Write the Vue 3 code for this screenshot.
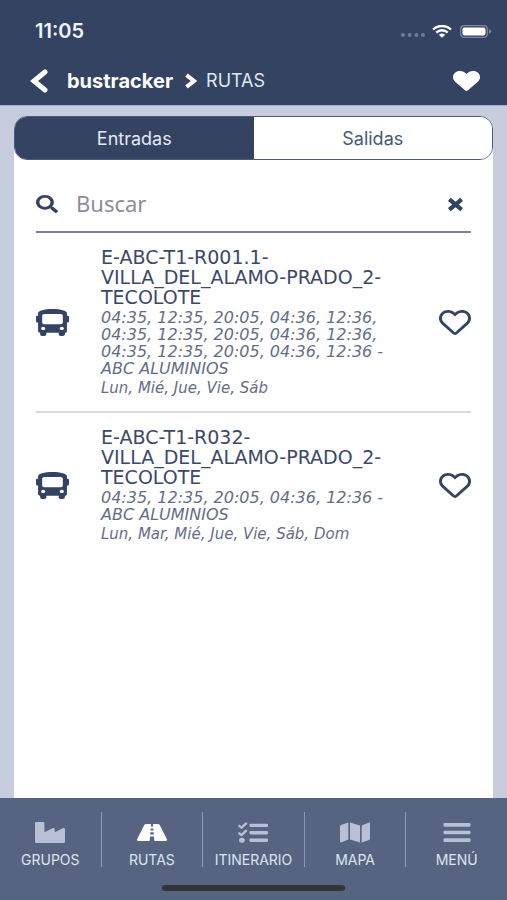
<script setup>
import { ref } from 'vue'

const tab = ref('Entradas')
const query = ref('')
const tabs = ['Entradas', 'Salidas']

const routes = [
  {
    name: ['E-ABC-T1-R001.1-', 'VILLA_DEL_ALAMO-PRADO_2-', 'TECOLOTE'],
    times: [
      '04:35, 12:35, 20:05, 04:36, 12:36,',
      '04:35, 12:35, 20:05, 04:36, 12:36,',
      '04:35, 12:35, 20:05, 04:36, 12:36 -',
      'ABC ALUMINIOS',
    ],
    days: 'Lun, Mié, Jue, Vie, Sáb',
  },
  {
    name: ['E-ABC-T1-R032-', 'VILLA_DEL_ALAMO-PRADO_2-', 'TECOLOTE'],
    times: ['04:35, 12:35, 20:05, 04:36, 12:36 -', 'ABC ALUMINIOS'],
    days: 'Lun, Mar, Mié, Jue, Vie, Sáb, Dom',
  },
]

const nav = [
  {
    label: 'GRUPOS',
    box: '0 32 512 448',
    path: 'M475.115 163.781L336 252.309v-68.28c0-18.916-20.931-30.399-36.885-20.248L160 252.309V56c0-13.255-10.745-24-24-24H24C10.745 32 0 42.745 0 56v400c0 13.255 10.745 24 24 24h464c13.255 0 24-10.745 24-24V184.029c0-18.917-20.931-30.399-36.885-20.248z',
  },
  {
    label: 'RUTAS',
    active: true,
    box: '0 0 30 21',
    path: 'M9 2H14L13.800 4.500H16.200L16 2H21Q22.200 2 22.700 3L29.800 17Q30.400 19 28.600 19H17.300L17 14.500H13L12.700 19H1.400Q-.4 19 .2 17L7.300 3Q7.800 2 9 2ZM13.600 6.500L13.500 8.500H16.500L16.400 6.500ZM13.300 10.300L13.200 12.500H16.800L16.700 10.300Z',
  },
  {
    label: 'ITINERARIO',
    box: '0 0 30 21',
    path: 'M1.200 2.600L3.400 4.300L7.300 .4Q8 -.1 8.600 .5L9.200 1.200Q9.600 1.700 9 2.300L4.300 6.600Q3.500 7.200 2.700 6.600L.3 4.600Q-.2 4 .3 3.400ZM1.200 9.900L3.400 11.600L7.300 7.700Q8 7.200 8.600 7.800L9.200 8.500Q9.600 9 9 9.600L4.300 13.900Q3.500 14.500 2.700 13.900L.3 11.900Q-.2 11.300 .3 10.700ZM1 18.300a2.900 2.500 0 1 0 5.800 0a2.900 2.500 0 1 0 -5.800 0ZM12.500 1.700H29Q30 1.700 30 2.500V4.300Q30 5.100 29 5.100H12.500Q11.500 5.100 11.500 4.300V2.500Q11.500 1.700 12.500 1.700ZM12.500 9H29Q30 9 30 9.800V11.600Q30 12.400 29 12.400H12.500Q11.500 12.400 11.500 11.600V9.800Q11.500 9 12.500 9ZM12.500 16.500H29Q30 16.500 30 17.300V19.100Q30 19.900 29 19.900H12.500Q11.500 19.900 11.500 19.100V17.300Q11.500 16.500 12.500 16.500Z',
  },
  {
    label: 'MAPA',
    box: '0 20 576 472',
    path: 'M0 117.66v346.32c0 11.32 11.43 19.06 21.94 14.86L160 416V32L20.12 87.95A32.006 32.006 0 0 0 0 117.66zM192 416l192 64V96L192 32v384zM554.06 33.16L416 96v384l139.88-55.95A31.996 31.996 0 0 0 576 394.34V48.02c0-11.32-11.43-19.06-21.94-14.86z',
  },
  {
    label: 'MENÚ',
    box: '0 0 30 21',
    path: 'M2.500 1H27.500Q28.500 1 28.500 2V3.800Q28.500 4.800 27.500 4.800H2.500Q1.500 4.800 1.500 3.800V2Q1.500 1 2.500 1ZM2.500 8.700H27.500Q28.500 8.700 28.500 9.700V11.300Q28.500 12.300 27.500 12.300H2.500Q1.500 12.300 1.500 11.300V9.700Q1.500 8.700 2.500 8.700ZM2.500 16.200H27.500Q28.500 16.200 28.500 17.200V19Q28.500 20 27.500 20H2.500Q1.500 20 1.500 19V17.200Q1.500 16.200 2.500 16.200Z',
  },
]
</script>

<template>
  <div class="page">
    <header class="header">
      <div class="status">
        <span class="clock">11:05</span>
        <svg class="dots" viewBox="0 0 24 4" aria-hidden="true">
          <circle cx="2" cy="2" r="2" /><circle cx="8.600" cy="2" r="2" />
          <circle cx="15.300" cy="2" r="2" /><circle cx="22" cy="2" r="2" />
        </svg>
        <svg class="wifi" viewBox="0 0 20 13" aria-hidden="true">
          <path d="M1 4.500C6 -.2 14 -.2 19 4.500" />
          <path d="M4.300 7.600C7.500 4.500 12.500 4.500 15.700 7.600" />
          <path class="fill" d="M6.800 9.800Q10 7.400 13.200 9.800L10 12.800Z" />
        </svg>
        <svg class="battery" viewBox="0 0 32 13" aria-hidden="true">
          <rect class="shell" x=".7" y=".7" width="26.600" height="11.600" rx="3.500" />
          <rect class="charge" x="2.500" y="2.400" width="23" height="8.200" rx="1.800" />
          <path class="cap" d="M29 4.300Q31.200 5 31.200 6.500Q31.200 8 29 8.700Z" />
        </svg>
      </div>
      <div class="crumbs">
        <button class="bare" aria-label="Atrás">
          <svg class="back" viewBox="0 0 18 24"><path d="M15 3L4 12L15 21" /></svg>
        </button>
        <a class="brand" href="#">bustracker</a>
        <svg class="next" viewBox="0 0 13 16" aria-hidden="true"><path d="M2.500 2.200L10 8L2.500 13.800" /></svg>
        <span class="current">RUTAS</span>
        <button class="bare fav" aria-label="Favoritos">
          <svg class="heart" viewBox="0 32 512 448" preserveAspectRatio="none">
            <path d="M462.3 62.6C407.5 15.900 326 24.300 275.700 76.200L256 96.500l-19.700-20.300C186.100 24.300 104.500 15.900 49.700 62.600c-62.800 53.600-66.100 149.800-9.900 207.900l193.500 199.800c12.500 12.900 32.800 12.900 45.300 0l193.500-199.800c56.300-58.100 53-154.300-9.800-207.900z" />
          </svg>
        </button>
      </div>
    </header>

    <main class="main">
      <section class="panel">
        <div class="tabs" role="tablist">
          <button
            v-for="t in tabs"
            :key="t"
            class="tab"
            :class="{ selected: t === tab }"
            role="tab"
            :aria-selected="t === tab"
            @click="tab = t"
          >{{ t }}</button>
        </div>

        <div class="content">
          <div class="search">
            <label class="search-label" for="search" aria-label="Buscar">
              <svg class="lens" viewBox="0 0 512 512" preserveAspectRatio="none">
                <path d="M505 442.700L405.300 343c-4.500-4.500-10.600-7-17-7H372c27.600-35.300 44-79.700 44-128C416 93.100 322.900 0 208 0S0 93.100 0 208s93.100 208 208 208c48.300 0 92.700-16.400 128-44v16.300c0 6.400 2.500 12.500 7 17l99.700 99.700c9.400 9.400 24.600 9.400 33.900 0l28.300-28.300c9.400-9.400 9.400-24.600.1-34zM208 336c-70.700 0-128-57.200-128-128 0-70.700 57.200-128 128-128 70.700 0 128 57.200 128 128 0 70.700-57.200 128-128 128z" />
              </svg>
            </label>
            <input id="search" v-model="query" class="field" type="text" placeholder="Buscar" />
            <button class="bare" aria-label="Borrar" @click="query = ''">
              <svg class="clear" viewBox="0 0 16 14"><path d="M2.200 2.200L13.800 11.800M13.800 2.200L2.200 11.800" /></svg>
            </button>
          </div>

          <ul class="routes">
            <li v-for="r in routes" :key="r.name[0]" class="route">
              <svg class="bus" viewBox="0 0 512 512" preserveAspectRatio="none" aria-hidden="true">
                <path d="M488 128h-8V80c0-44.800-99.200-80-224-80S32 35.200 32 80v48h-8c-13.250 0-24 10.740-24 24v80c0 13.250 10.750 24 24 24h8v160c0 17.670 14.330 32 32 32v32c0 17.670 14.330 32 32 32h32c17.670 0 32-14.330 32-32v-32h192v32c0 17.670 14.330 32 32 32h32c17.670 0 32-14.330 32-32v-32h6.400c16 0 25.600-12.800 25.600-25.600V256h8c13.250 0 24-10.750 24-24v-80c0-13.260-10.750-24-24-24zM112 400c-17.670 0-32-14.330-32-32s14.330-32 32-32 32 14.330 32 32-14.330 32-32 32zm16-112c-17.670 0-32-14.330-32-32V128c0-17.670 14.330-32 32-32h256c17.670 0 32 14.330 32 32v128c0 17.670-14.330 32-32 32H128zm272 112c-17.670 0-32-14.330-32-32s14.330-32 32-32 32 14.330 32 32-14.330 32-32 32z" />
              </svg>
              <div class="info">
                <h2 class="name"><span v-for="(l, i) in r.name" :key="i" class="line">{{ l }}</span></h2>
                <p class="times"><span v-for="(l, i) in r.times" :key="i" class="line">{{ l }}</span></p>
                <p class="days">{{ r.days }}</p>
              </div>
              <button class="bare" aria-label="Agregar a favoritos">
                <svg class="like" viewBox="0 32 512 448" preserveAspectRatio="none">
                  <path d="M458.400 64.300C400.600 15.700 311.300 23 256 79.300 200.700 23 111.400 15.600 53.600 64.300-21.600 127.600-10.600 230.800 43 285.500l175.400 178.700c10 10.200 23.400 15.900 37.600 15.900 14.300 0 27.600-5.600 37.600-15.800L469 285.600c53.500-54.700 64.700-157.900-10.600-221.300zm-23.600 187.500L259.400 430.500c-2.400 2.400-4.400 2.400-6.800 0L77.200 251.800c-36.500-37.200-43.900-107.600 7.300-150.700 38.900-32.700 98.900-27.800 136.500 10.500l35 35.700 35-35.700c37.800-38.500 97.800-43.200 136.500-10.600 51.100 43.100 43.500 113.900 7.300 150.800z" />
                </svg>
              </button>
            </li>
          </ul>
        </div>
      </section>
    </main>

    <footer class="footer">
      <nav class="nav">
        <a v-for="n in nav" :key="n.label" href="#" class="item" :class="{ active: n.active }">
          <svg class="icon" :viewBox="n.box" preserveAspectRatio="none" aria-hidden="true">
            <path :d="n.path" fill-rule="evenodd" />
          </svg>
          <span>{{ n.label }}</span>
        </a>
      </nav>
      <div class="home"></div>
    </footer>
  </div>
</template>

<style>
body {
  margin: 0;
}
</style>

<style scoped>
.page {
  display: flex;
  flex-direction: column;
  min-height: 100vh;
  background: #c7cddc;
  color: #344363;
  font-family: Inter, sans-serif;
}
svg {
  display: block;
  fill: currentColor;
  flex: none;
}
.bare {
  padding: 0;
  border: 0;
  background: none;
  color: inherit;
  cursor: pointer;
}
.header {
  background: #344362;
  border-bottom: 1px solid #a4b1d0;
  color: #fff;
}
.status {
  display: flex;
  align-items: center;
  height: 56px;
  padding: 6px 15px 0 35px;
  box-sizing: border-box;
}
.clock {
  margin-right: auto;
  color: #eef4fc;
  font-size: 20px;
  font-weight: 600;
  line-height: 20px;
}
.dots {
  width: 24px;
  height: 4px;
  margin-top: 8px;
  color: #6d7b98;
}
.wifi {
  width: 20px;
  height: 13px;
  margin: 0 8px 0 7px;
}
.wifi path {
  fill: none;
  stroke: #fff;
  stroke-width: 2.400;
}
.wifi .fill {
  fill: #fff;
  stroke: none;
}
.battery {
  width: 32px;
  height: 13px;
}
.battery .shell {
  fill: none;
  stroke: #7d89a2;
  stroke-width: 1.200;
}
.battery .cap {
  fill: #7d89a2;
}
.crumbs {
  display: flex;
  align-items: center;
  height: 49px;
  padding: 0 27px 0 30px;
}
.back {
  width: 18px;
  height: 24px;
  fill: none;
  stroke: #fff;
  stroke-width: 5;
  stroke-linecap: round;
}
.brand {
  margin: 0 11px 0 19px;
  color: #fff;
  font-size: 20px;
  font-weight: 700;
  line-height: 24px;
  text-decoration: none;
}
.next {
  width: 13px;
  height: 16px;
  fill: none;
  stroke: #fff;
  stroke-width: 4;
}
.current {
  margin-left: 9px;
  color: #dfe7f5;
  font-size: 18px;
}
.fav {
  margin-left: auto;
}
.heart {
  width: 27px;
  height: 20px;
}
.main {
  display: flex;
  flex: 1;
  padding: 10px 14px 0;
}
.panel {
  flex: 1;
  min-width: 0;
  border-radius: 14px 14px 0 0;
  background: #fff;
}
.tabs {
  display: flex;
  height: 44px;
  box-sizing: border-box;
  overflow: hidden;
  border: 1px solid #4c5a7c;
  border-radius: 13px;
}
.tab {
  flex: 1;
  padding: 0;
  border: 0;
  background: #fff;
  color: #4b5877;
  font: 18px Inter, sans-serif;
  cursor: pointer;
}
.tab.selected {
  background: #344362;
  color: #e3eaf6;
}
.content {
  padding: 17px 22px 24px;
}
.search {
  display: flex;
  align-items: center;
  height: 54px;
  padding-right: 7px;
  border-bottom: 2px solid #817f9b;
}
.lens {
  width: 22px;
  height: 18px;
}
.field {
  flex: 1;
  min-width: 0;
  height: 30px;
  padding: 0 0 2px;
  margin: 0 18px;
  box-sizing: border-box;
  border: 0;
  outline: 0;
  background: none;
  color: #344363;
  font: 22px "Noto Sans", sans-serif;
}
.field::placeholder {
  color: #8d8c9d;
  opacity: 1;
}
.clear {
  width: 17px;
  height: 15px;
  fill: none;
  stroke: #344362;
  stroke-width: 4;
}
.routes {
  margin: 0;
  padding: 0;
  list-style: none;
}
.route {
  display: flex;
  align-items: center;
  padding: 14px 0;
}
.route + .route {
  border-top: 2px solid #d8dbe0;
}
.bus {
  width: 33px;
  height: 27px;
}
.info {
  flex: 1;
  min-width: 0;
  margin: 0 32px;
}
.line {
  display: block;
  white-space: nowrap;
}
.name {
  margin: 0 0 2px;
  color: #3b4969;
  font: 400 19px/20px "DejaVu Sans", sans-serif;
}
.times,
.days {
  margin: 0;
  color: #646d87;
  font: italic 16px/17px "DejaVu Sans", sans-serif;
}
.days {
  margin-top: 3px;
  font-size: 15px;
}
.like {
  width: 32px;
  height: 25px;
}
.footer {
  background: #566482;
}
.nav {
  display: flex;
  padding: 14px 0 18px;
}
.item {
  display: flex;
  flex: 1;
  flex-direction: column;
  align-items: center;
  gap: 9px;
  box-sizing: border-box;
  height: 55px;
  padding-top: 10px;
  color: #b7c0d4;
  text-decoration: none;
  font-size: 14px;
  line-height: 16px;
}
.item + .item {
  border-left: 1px solid #8c99b3;
}
.item span {
  color: #dce4f3;
}
.item.active {
  color: #fff;
}
.icon {
  width: 30px;
  height: 21px;
}
.home {
  width: 36%;
  height: 6px;
  margin: 0 auto 9px;
  border-radius: 3px;
  background: #30353a;
}
</style>
